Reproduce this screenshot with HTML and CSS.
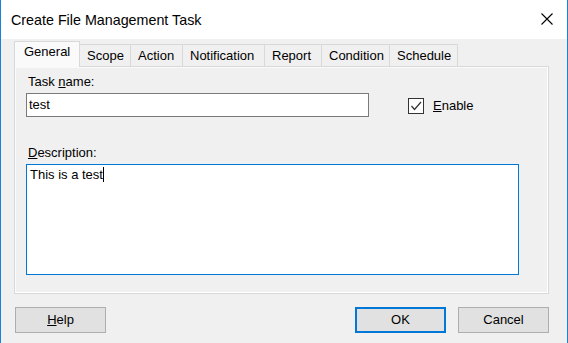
FILE: index.html
```html
<!DOCTYPE html>
<html>
<head>
<meta charset="utf-8">
<link rel="stylesheet" href="styles.css">
</head>
<body>
<div class="window">
  <div class="titlebar">
    <span class="title">Create File Management Task</span>
    <svg class="close" width="12" height="12" viewBox="0 0 12 12"><path d="M0.5 0.5 L11.5 11.5 M11.5 0.5 L0.5 11.5" stroke="#000" stroke-width="1.1" fill="none"/></svg>
  </div>
  <div class="content">
    <div class="tabs">
      <div class="tab active">General</div>
      <div class="tab">Scope</div>
      <div class="tab">Action</div>
      <div class="tab">Notification</div>
      <div class="tab">Report</div>
      <div class="tab">Condition</div>
      <div class="tab last">Schedule</div>
    </div>
    <div class="panel">
      <div class="label first">Task <u>n</u>ame:</div>
      <div class="row">
        <div class="input">test</div>
        <div class="check">
          <span class="box"><svg width="14" height="14" viewBox="0 0 14 14"><path d="M2.5 7 L5.5 10.5 L12 3" stroke="#333" stroke-width="1.2" fill="none"/></svg></span>
          <span class="check-label"><u>E</u>nable</span>
        </div>
      </div>
      <div class="label desc"><u>D</u>escription:</div>
      <div class="textarea">This is a test<span class="caret"></span></div>
    </div>
    <div class="buttons">
      <div class="btn"><u>H</u>elp</div>
      <div class="spacer"></div>
      <div class="btn default">OK</div>
      <div class="btn">Cancel</div>
    </div>
  </div>
</div>
</body>
</html>
```
FILE: styles.css
```css
html, body {
  margin: 0;
  padding: 0;
  background: #f0f0f0;
}
body {
  font-family: "Liberation Sans", Arial, sans-serif;
  font-size: 13px;
  color: #000;
}
.window {
  width: 568px;
  height: 343px;
  box-sizing: border-box;
  border-left: 1px solid #1883d7;
  border-right: 1px solid #1883d7;
  background: #f0f0f0;
  display: flex;
  flex-direction: column;
}
.titlebar {
  height: 39px;
  background: #fff;
  display: flex;
  align-items: center;
  padding: 0 14px 0 10px;
  flex: none;
}
.title {
  font-size: 14.3px;
  flex: 1;
  margin-top: 1px;
}
.close {
  display: block;
  margin-bottom: 1px;
}
.content {
  padding: 2px 18px 0 13px;
  display: flex;
  flex-direction: column;
}
.tabs {
  display: flex;
  align-items: flex-end;
  height: 25px;
}
.tab {
  height: 22px;
  box-sizing: border-box;
  border: 1px solid #d9d9d9;
  border-right: none;
  border-bottom: none;
  background: #f0f0f0;
  line-height: 21px;
  padding: 0 7px;
  white-space: nowrap;
}
.tab.last {
  border-right: 1px solid #d9d9d9;
}
.tab:nth-child(2) { width: 51px; }
.tab:nth-child(3) { width: 52px; }
.tab:nth-child(4) { width: 82px; }
.tab:nth-child(5) { width: 57px; }
.tab:nth-child(6) { width: 68px; }
.tab:nth-child(7) { width: 69px; }
.tab.active {
  width: 66px;
  height: 26px;
  margin-bottom: -1px;
  position: relative;
  z-index: 1;
  background: #fafafa;
  border-right: 1px solid #d9d9d9;
  margin-right: -1px;
  line-height: 20px;
  padding: 0 9px;
}
.tab.active + .tab {
  border-left: 1px solid #d9d9d9;
}
.panel {
  height: 228px;
  box-sizing: border-box;
  border: 1px solid #d9d9d9;
  box-shadow: inset -1px -1px 0 #fff, inset 1px 1px 0 #fafafa;
  padding: 0 30px 0 11px;
  display: flex;
  flex-direction: column;
}
.label {
  line-height: 15px;
  padding-left: 2px;
}
.label.first {
  margin-top: 7px;
}
.row {
  display: flex;
  align-items: center;
  margin-top: 4px;
}
.input {
  width: 343px;
  height: 24px;
  box-sizing: border-box;
  border: 1px solid #7a7a7a;
  background: #fff;
  padding: 0 2px;
  line-height: 22px;
}
.check {
  display: flex;
  align-items: center;
  margin-left: 39px;
  margin-top: 1px;
}
.box {
  width: 16px;
  height: 16px;
  box-sizing: border-box;
  border: 1px solid #333;
  background: #fff;
  display: flex;
  align-items: center;
  justify-content: center;
}
.box svg { display: block; }
.check-label {
  margin-left: 9px;
}
.label.desc {
  margin-top: 28px;
}
.textarea {
  margin-top: 4px;
  width: 493px;
  height: 111px;
  box-sizing: border-box;
  border: 1px solid #0078d7;
  background: #fff;
  padding: 2px 3px;
  line-height: 15px;
}
.caret {
  display: inline-block;
  width: 1px;
  height: 15px;
  background: #000;
  vertical-align: top;
}
.buttons {
  display: flex;
  margin-top: 13px;
  padding-left: 1px;
}
.spacer { flex: 1; }
.btn {
  width: 91px;
  height: 26px;
  box-sizing: border-box;
  border: 1px solid #adadad;
  background: #e1e1e1;
  text-align: center;
  line-height: 24px;
}
.btn.default {
  border: 2px solid #0078d7;
  line-height: 22px;
  margin-right: 12px;
}
```
